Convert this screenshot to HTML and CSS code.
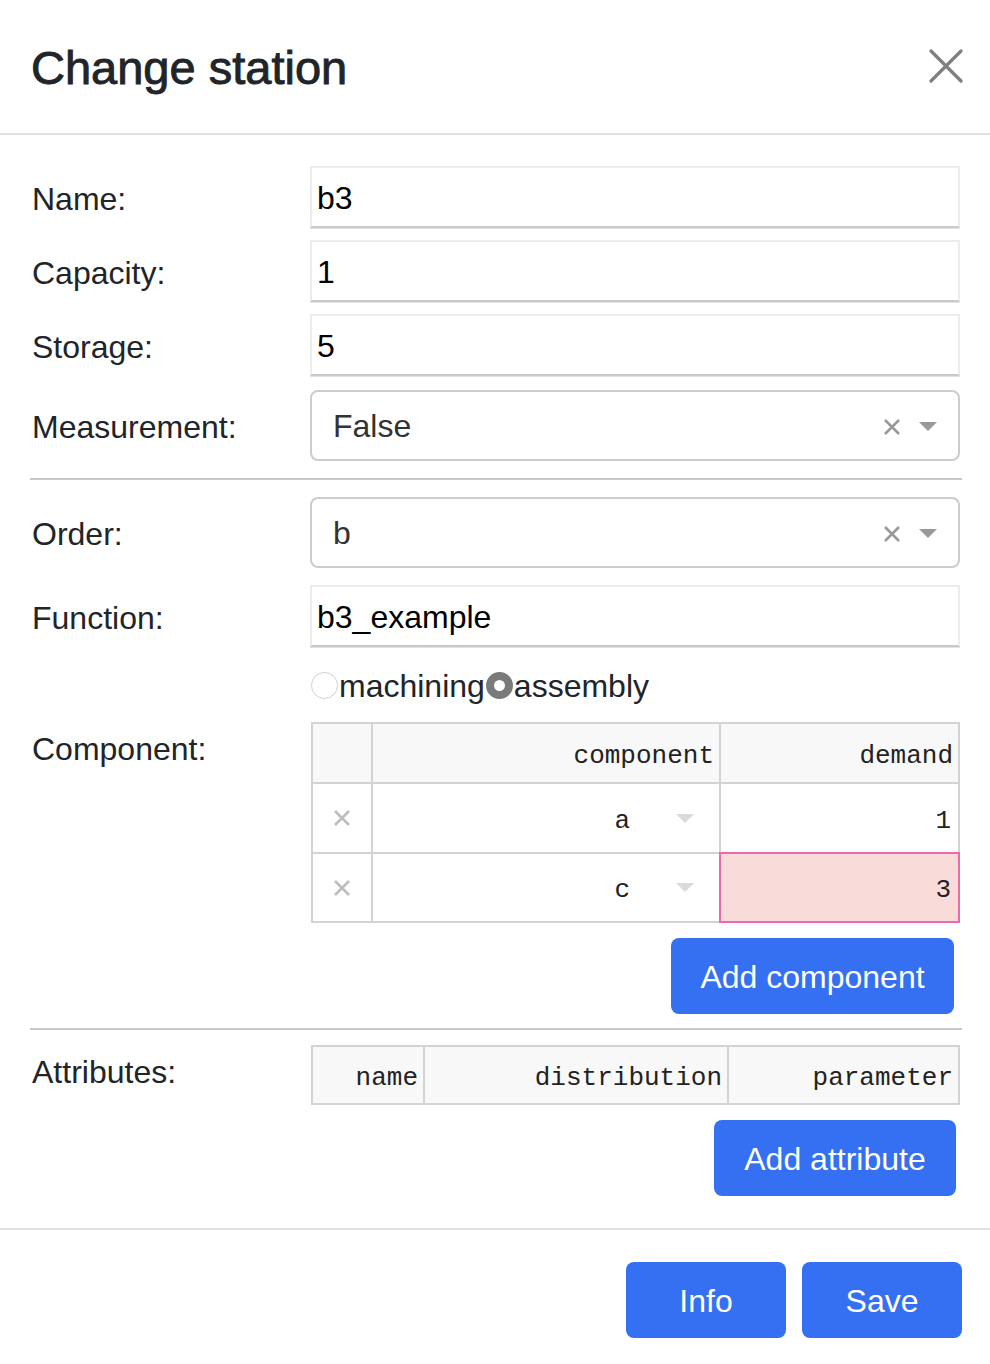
FILE: index.html
```html
<!DOCTYPE html>
<html>
<head>
<meta charset="utf-8">
<link rel="stylesheet" href="styles.css">
</head>
<body>
<div class="modal">
  <div class="modal-header">
    <h5 class="modal-title">Change station</h5>
    <button class="close" aria-label="Close">
      <svg width="34" height="34" viewBox="0 0 34 34"><path d="M2 2L32 32M32 2L2 32" stroke="#7f7f7f" stroke-width="3.2" stroke-linecap="round"/></svg>
    </button>
  </div>
  <div class="modal-body">
    <div class="row r-name"><label class="lbl">Name:</label><div class="input">b3</div></div>
    <div class="row r-cap"><label class="lbl">Capacity:</label><div class="input">1</div></div>
    <div class="row r-sto"><label class="lbl">Storage:</label><div class="input">5</div></div>
    <div class="row r-meas"><label class="lbl">Measurement:</label>
      <div class="select"><span class="sel-val">False</span><svg class="sel-clear" width="18" height="18" viewBox="0 0 18 18"><path d="M2 2L16 16M16 2L2 16" stroke="#999" stroke-width="2.6"/></svg><span class="sel-arrow"></span></div>
    </div>
    <hr class="sep sep1">
    <div class="row r-order"><label class="lbl">Order:</label>
      <div class="select"><span class="sel-val">b</span><svg class="sel-clear" width="18" height="18" viewBox="0 0 18 18"><path d="M2 2L16 16M16 2L2 16" stroke="#999" stroke-width="2.6"/></svg><span class="sel-arrow"></span></div>
    </div>
    <div class="row r-func"><label class="lbl">Function:</label><div class="input">b3_example</div></div>
    <div class="row r-radio"><span></span>
      <div class="radios">
        <span class="radio"></span><span class="rtext">machining</span>
        <span class="radio checked"></span><span class="rtext">assembly</span>
      </div>
    </div>
    <div class="row r-comp top"><label class="lbl">Component:</label>
      <div class="ctl">
        <div class="grid comp-grid">
          <div class="cell head"></div>
          <div class="cell head">component</div>
          <div class="cell head">demand</div>
          <div class="cell del r1"><svg width="18" height="18" viewBox="0 0 18 18"><path d="M2 2L16 16M16 2L2 16" stroke="#bdbdbd" stroke-width="2.6"/></svg></div>
          <div class="cell dd r1"><span>a</span><span class="dd-arrow"></span></div>
          <div class="cell num r1">1</div>
          <div class="cell del r2"><svg width="18" height="18" viewBox="0 0 18 18"><path d="M2 2L16 16M16 2L2 16" stroke="#bdbdbd" stroke-width="2.6"/></svg></div>
          <div class="cell dd r2"><span>c</span><span class="dd-arrow"></span></div>
          <div class="cell num r2 invalid">3</div>
        </div>
        <div class="btn-row"><button class="btn btn-add-comp">Add component</button></div>
      </div>
    </div>
    <hr class="sep sep2">
    <div class="row r-attr top"><label class="lbl">Attributes:</label>
      <div class="ctl">
        <div class="grid attr-grid">
          <div class="cell head">name</div>
          <div class="cell head">distribution</div>
          <div class="cell head">parameter</div>
        </div>
        <div class="btn-row"><button class="btn btn-add-attr">Add attribute</button></div>
      </div>
    </div>
  </div>
  <div class="modal-footer">
    <button class="btn btn-foot">Info</button>
    <button class="btn btn-foot">Save</button>
  </div>
</div>
</body>
</html>
```

FILE: styles.css
```css
* { box-sizing: border-box; }
html, body { margin: 0; padding: 0; background: #fff; }
body {
  font-family: "Liberation Sans", Arial, sans-serif;
  color: #212529;
  width: 990px;
  height: 1364px;
  overflow: hidden;
}
.modal { width: 990px; }

.modal-header {
  height: 135px;
  border-bottom: 2px solid #dee2e6;
  display: flex;
  align-items: center;
  justify-content: space-between;
  padding: 0 27px 0 31px;
}
.modal-title {
  margin: 0;
  font-size: 47px;
  font-weight: 500;
  line-height: 1.2;
  color: #212529;
  padding-top: 3px;
  -webkit-text-stroke: 0.9px #212529;
}
.close {
  border: 0;
  background: none;
  padding: 0;
  width: 34px;
  height: 34px;
  display: flex;
  margin-bottom: 2px;
}

.modal-body { padding: 31px 28px 32px 30px; }

.row {
  display: grid;
  grid-template-columns: 280px 650px;
  align-items: center;
}
.row.top { align-items: start; }
.lbl {
  font-size: 32px;
  line-height: 48px;
  padding-left: 2px;
  padding-top: 3px;
  color: #212529;
}
.r-name, .r-cap { margin-bottom: 12px; }
.r-sto { margin-bottom: 14px; }
.r-order { margin-bottom: 17px; }
.r-radio { margin-top: 19px; }
.r-comp { margin-top: 18px; }

.input {
  height: 62px;
  border: 2px solid #ececec;
  border-bottom-color: #c9c9c9;
  box-shadow: 0 1px 0 #e2e2e2;
  font-size: 32px;
  line-height: 60px;
  padding-left: 5px;
  color: #000;
}

.select {
  height: 71px;
  border: 2px solid #cccccc;
  border-radius: 8px;
  display: flex;
  align-items: center;
  padding: 0 21px 0 21px;
  font-size: 32px;
  color: #333;
}
.sel-val { flex: 1; padding-top: 2px; }
.sel-clear {
  margin-right: 18px;
  margin-top: 3px;
  flex: none;
}
.sel-arrow {
  width: 0; height: 0;
  border-left: 9px solid transparent;
  border-right: 9px solid transparent;
  border-top: 9px solid #999;
  margin-top: 1px;
}

.sep {
  border: 0;
  height: 2px;
  background: #c8c8c8;
  margin: 0;
  width: 932px;
}
.sep1 { margin-top: 17px; margin-bottom: 17px; }
.sep2 { margin-top: 14px; margin-bottom: 15px; }

.radios {
  display: flex;
  align-items: center;
  height: 38px;
  font-size: 32px;
  color: #212529;
}
.rtext { padding-top: 2px; }
.radio {
  width: 27px; height: 27px;
  border-radius: 50%;
  border: 1.5px solid #cfcfcf;
  background: #fff;
  margin-left: 1px;
  margin-right: 1px;
  flex: none;
}
.radio.checked {
  border: 8px solid #7a7a7a;
  background: #fff;
}

.ctl { display: flex; flex-direction: column; }
.grid {
  display: grid;
  background: #d3d3d3;
  padding: 2px;
  gap: 2px;
  margin-left: 1px;
  width: 649px;
  font-family: "Liberation Mono", "Courier New", monospace;
  font-size: 26px;
  color: #222;
}
.comp-grid {
  grid-template-columns: 58px 346px 237px;
  grid-template-rows: 58px 68px 67px;
}
.attr-grid {
  grid-template-columns: 110px 302px 229px;
  grid-template-rows: 56px;
}
.cell {
  background: #fff;
  display: flex;
  align-items: center;
  justify-content: flex-end;
  padding-right: 5px;
  padding-top: 5px;
}
.cell.head { background: #f8f8f8; }
.cell.del {
  justify-content: center;
  padding: 0;
}
.cell.dd { padding-right: 25px; }
.cell.dd span:first-child { margin-right: 46px; }
.dd-arrow {
  width: 0; height: 0;
  border-left: 9px solid transparent;
  border-right: 9px solid transparent;
  border-top: 9px solid #dadada;
  margin-top: -5px;
}
.cell.num { padding-right: 7px; }
.cell.invalid {
  background: #f9dcd9;
  box-shadow: 0 0 0 2px #ea6ba6;
  position: relative;
}

.btn-row { display: flex; justify-content: flex-end; margin-top: 15px; }
.btn {
  border: 0;
  background: #3570f3;
  color: #fff;
  font-family: "Liberation Sans", Arial, sans-serif;
  font-size: 32px;
  height: 76px;
  border-radius: 8px;
  padding: 2px 0 0 0;
}
.btn-add-comp { width: 283px; margin-right: 6px; }
.btn-add-attr { width: 242px; margin-right: 4px; }

.modal-footer {
  border-top: 2px solid #dee2e6;
  display: flex;
  justify-content: flex-end;
  gap: 16px;
  padding: 32px 28px 0 0;
}
.btn-foot { width: 160px; }
```
